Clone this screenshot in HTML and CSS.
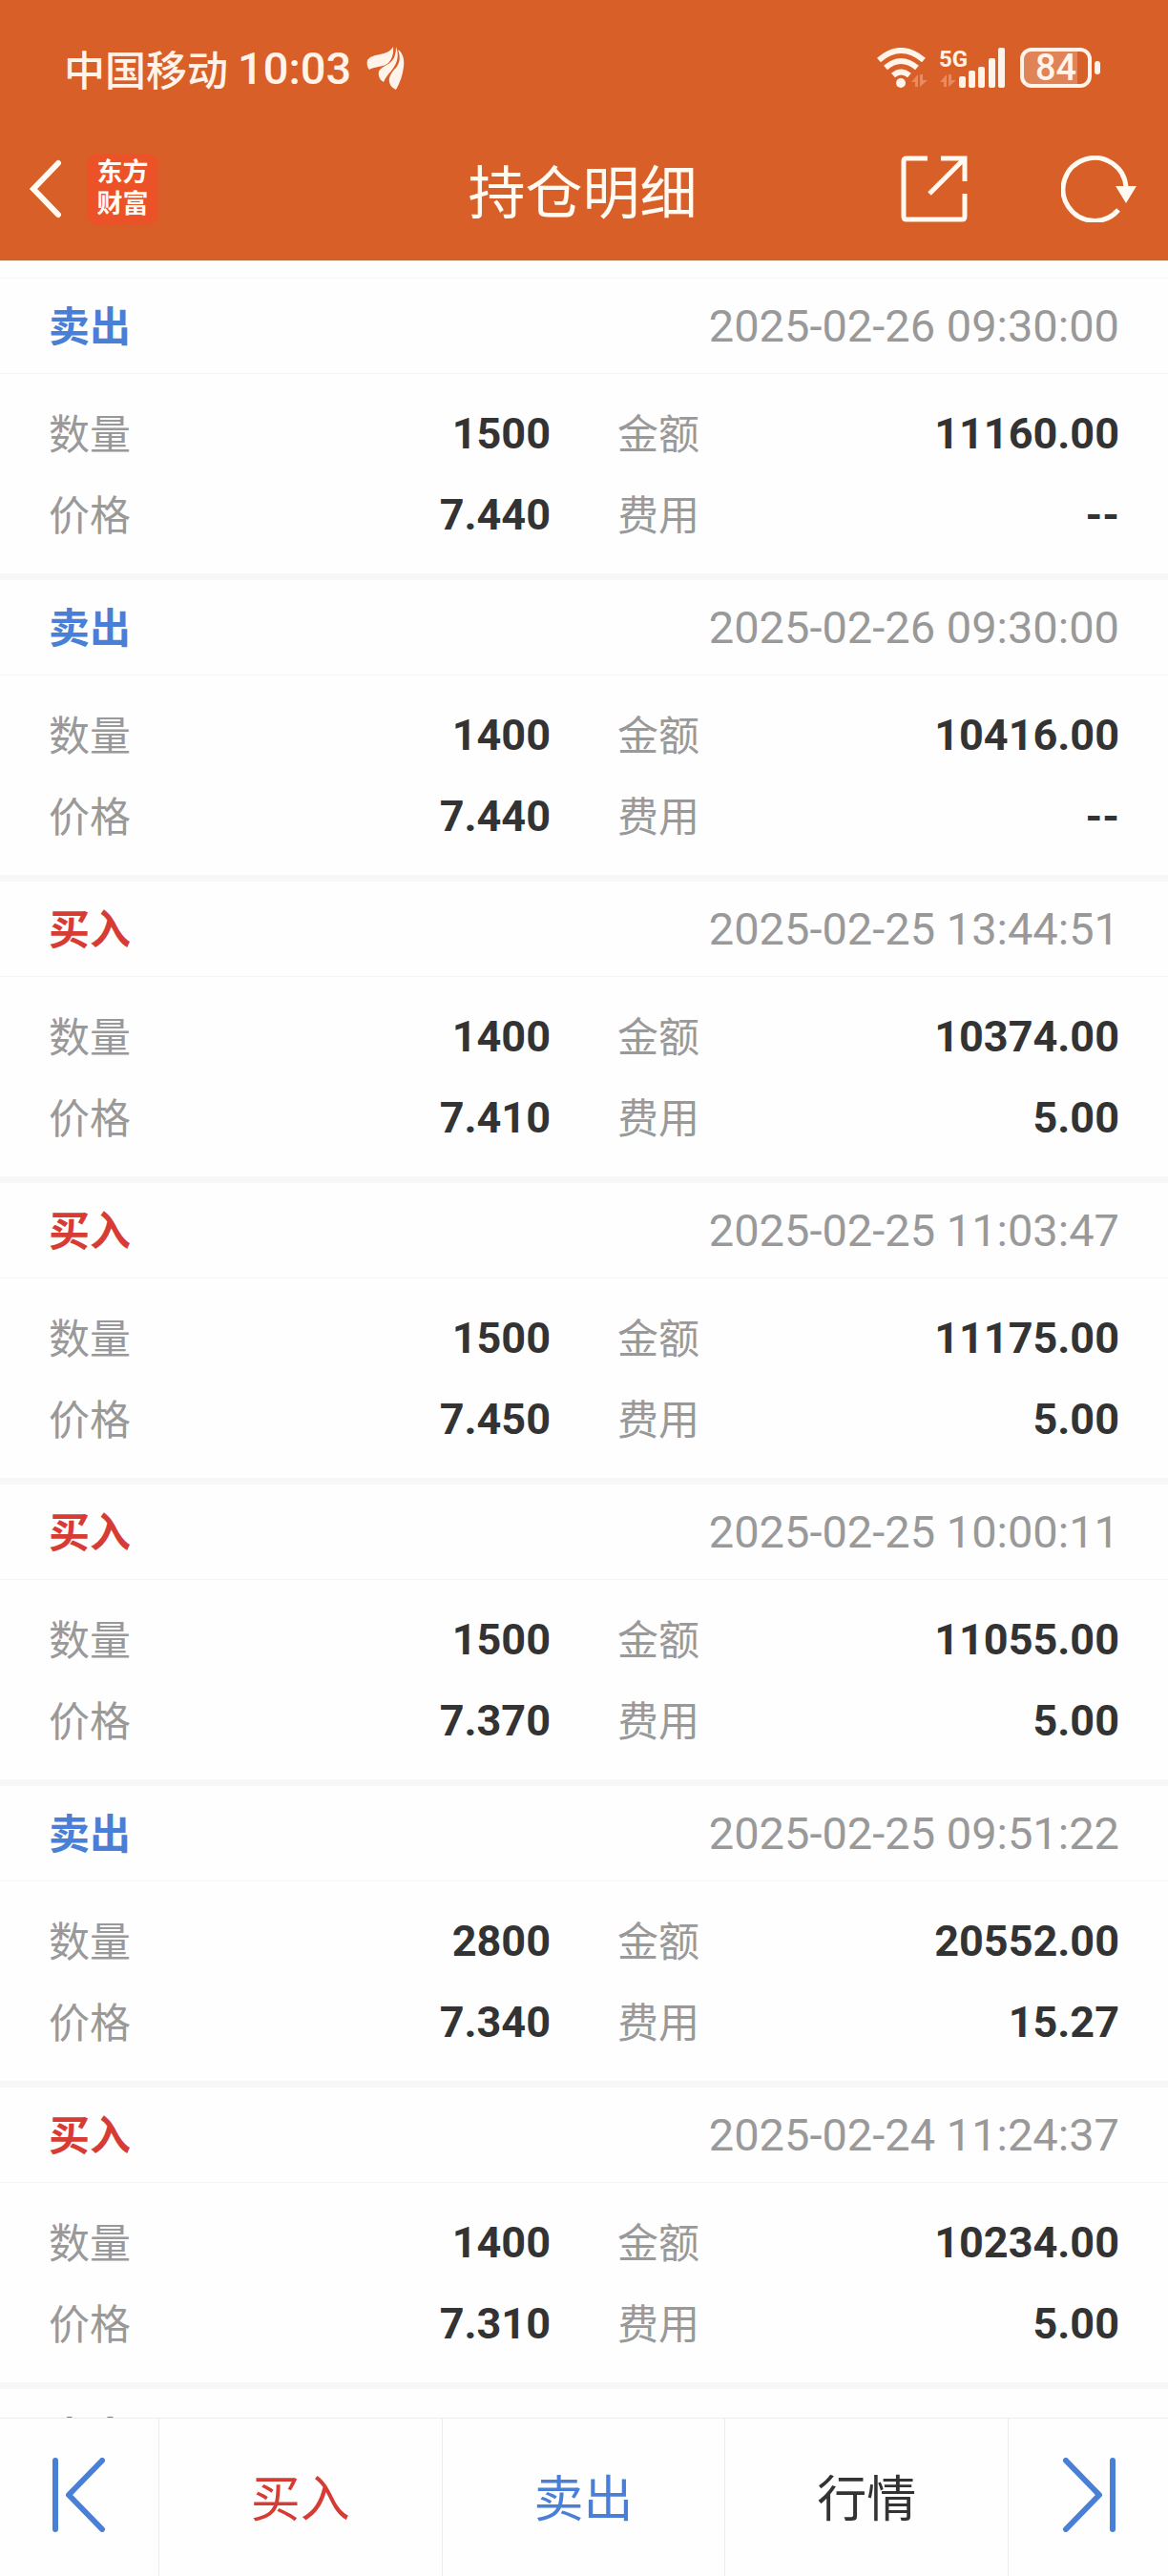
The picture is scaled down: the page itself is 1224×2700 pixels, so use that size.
FILE: index.html
```html
<!DOCTYPE html>
<html lang="zh-CN">
<head>
    <meta charset="UTF-8">
    <meta name="viewport" content="width=device-width, initial-scale=1.0">
    <title>持仓明细</title>
    <link rel="stylesheet" href="styles.css">
</head>
<body>
    <div class="app">
        <header class="header">
            <div class="status">
                <span class="carrier">中国移动</span>
                <span class="clock">10:03</span>
                <svg class="bird" width="40" height="46" viewBox="0 0 40 46" fill="currentColor">
                    <path d="M28 1C25 6 20 8 14 9C9 10 4 11 1 15C0 19 1 23 3 25C8 22 15 22 20 20C26 17 29 9 28 1Z"/>
                    <path d="M31 1C31 11 28 16 23 19C18 22 14 24 13 27C12 31 14 36 18 38C21 31 26 27 29 22C33 16 34 8 31 1Z"/>
                    <path d="M33 4C36 12 35 18 31 23C27 27 25 30 24 34C23 39 26 44 31 46C35 39 38 31 39 22C40 14 38 7 33 4Z"/>
                </svg>
                <div class="signals">
                    <svg class="wifi" width="54" height="42" viewBox="0 0 54 42" fill="none" stroke="currentColor" stroke-width="6">
                        <path d="M2 13Q25 -7 49 13"/>
                        <path d="M9 21Q25 7 42 21"/>
                        <path d="M17 29Q25 22 34 29"/>
                        <circle cx="25" cy="37" r="5" fill="currentColor" stroke="none"/>
                        <path class="faint" d="M36 36L43 28V41H40V36ZM45 28H48V34H53L45 41Z"/>
                    </svg>
                    <svg class="cell" width="69" height="42" viewBox="0 0 69 42" fill="currentColor">
                        <text class="net" x="0" y="20">5G</text>
                        <path class="faint" d="M1 36L8 28V41H5V36ZM10 28H13V34H18L10 41Z"/>
                        <rect x="21" y="30" width="7" height="12" rx="2"/>
                        <rect x="31" y="24" width="7" height="18" rx="2"/>
                        <rect x="41" y="20" width="7" height="22" rx="2"/>
                        <rect x="52" y="11" width="7" height="31" rx="2"/>
                        <rect x="62" y="0" width="7" height="42" rx="2"/>
                    </svg>
                    <div class="battery">84</div>
                </div>
            </div>
            <nav class="titlebar">
                <div class="side">
                    <button class="icon-btn" aria-label="返回">
                        <svg width="36" height="62" viewBox="0 0 36 62" fill="none" stroke="currentColor" stroke-width="6" stroke-linecap="round" stroke-linejoin="miter">
                            <path d="M32 4L6 31L32 58"/>
                        </svg>
                    </button>
                    <div class="logo">东方<br>财富</div>
                </div>
                <h1 class="title">持仓明细</h1>
                <div class="side side-right">
                    <button class="icon-btn" aria-label="分享">
                        <svg width="70" height="70" viewBox="0 0 70 70" fill="none" stroke="currentColor" stroke-width="5">
                            <path d="M28 3H6Q3 3 3 6V64Q3 67 6 67H64Q67 67 67 64V40M42 3H67V27M67 3L30 40"/>
                        </svg>
                    </button>
                    <button class="icon-btn" aria-label="刷新">
                        <svg width="80" height="70" viewBox="0 0 80 70" fill="none" stroke="currentColor" stroke-width="5">
                            <path d="M68 34A33 33 0 1 0 60 57"/>
                            <path d="M57 32H79L68 50Z" fill="currentColor" stroke="none"/>
                        </svg>
                    </button>
                </div>
            </nav>
        </header>

        <main class="list">
            <section class="card">
                <div class="card-head">
                    <h2 class="sell">卖出</h2>
                    <time>2025-02-26 09:30:00</time>
                </div>
                <dl>
                    <div><dt>数量</dt><dd>1500</dd></div>
                    <div><dt>金额</dt><dd>11160.00</dd></div>
                    <div><dt>价格</dt><dd>7.440</dd></div>
                    <div><dt>费用</dt><dd>--</dd></div>
                </dl>
            </section>
            <section class="card">
                <div class="card-head">
                    <h2 class="sell">卖出</h2>
                    <time>2025-02-26 09:30:00</time>
                </div>
                <dl>
                    <div><dt>数量</dt><dd>1400</dd></div>
                    <div><dt>金额</dt><dd>10416.00</dd></div>
                    <div><dt>价格</dt><dd>7.440</dd></div>
                    <div><dt>费用</dt><dd>--</dd></div>
                </dl>
            </section>
            <section class="card">
                <div class="card-head">
                    <h2 class="buy">买入</h2>
                    <time>2025-02-25 13:44:51</time>
                </div>
                <dl>
                    <div><dt>数量</dt><dd>1400</dd></div>
                    <div><dt>金额</dt><dd>10374.00</dd></div>
                    <div><dt>价格</dt><dd>7.410</dd></div>
                    <div><dt>费用</dt><dd>5.00</dd></div>
                </dl>
            </section>
            <section class="card">
                <div class="card-head">
                    <h2 class="buy">买入</h2>
                    <time>2025-02-25 11:03:47</time>
                </div>
                <dl>
                    <div><dt>数量</dt><dd>1500</dd></div>
                    <div><dt>金额</dt><dd>11175.00</dd></div>
                    <div><dt>价格</dt><dd>7.450</dd></div>
                    <div><dt>费用</dt><dd>5.00</dd></div>
                </dl>
            </section>
            <section class="card">
                <div class="card-head">
                    <h2 class="buy">买入</h2>
                    <time>2025-02-25 10:00:11</time>
                </div>
                <dl>
                    <div><dt>数量</dt><dd>1500</dd></div>
                    <div><dt>金额</dt><dd>11055.00</dd></div>
                    <div><dt>价格</dt><dd>7.370</dd></div>
                    <div><dt>费用</dt><dd>5.00</dd></div>
                </dl>
            </section>
            <section class="card">
                <div class="card-head">
                    <h2 class="sell">卖出</h2>
                    <time>2025-02-25 09:51:22</time>
                </div>
                <dl>
                    <div><dt>数量</dt><dd>2800</dd></div>
                    <div><dt>金额</dt><dd>20552.00</dd></div>
                    <div><dt>价格</dt><dd>7.340</dd></div>
                    <div><dt>费用</dt><dd>15.27</dd></div>
                </dl>
            </section>
            <section class="card">
                <div class="card-head">
                    <h2 class="buy">买入</h2>
                    <time>2025-02-24 11:24:37</time>
                </div>
                <dl>
                    <div><dt>数量</dt><dd>1400</dd></div>
                    <div><dt>金额</dt><dd>10234.00</dd></div>
                    <div><dt>价格</dt><dd>7.310</dd></div>
                    <div><dt>费用</dt><dd>5.00</dd></div>
                </dl>
            </section>
            <section class="card">
                <div class="card-head">
                    <h2 class="sell">卖出</h2>
                </div>
            </section>
        </main>

        <nav class="tabs">
            <button class="tab tab-end sell" aria-label="上一个">
                <svg width="56" height="78" viewBox="0 0 56 78" fill="none" stroke="currentColor" stroke-width="6" stroke-linecap="round" stroke-linejoin="round">
                    <path d="M3 3V75M52 3L17 39L52 75"/>
                </svg>
            </button>
            <button class="tab buy">买入</button>
            <button class="tab sell">卖出</button>
            <button class="tab">行情</button>
            <button class="tab tab-end sell" aria-label="下一个">
                <svg width="56" height="78" viewBox="0 0 56 78" fill="none" stroke="currentColor" stroke-width="6" stroke-linecap="round" stroke-linejoin="round">
                    <path d="M53 3V75M4 3L39 39L4 75"/>
                </svg>
            </button>
        </nav>
    </div>
</body>
</html>
```
FILE: styles.css
```css
* {
    box-sizing: border-box;
    margin: 0;
    padding: 0;
}
body {
    font-family: Roboto, "Noto Sans CJK SC", sans-serif;
    font-size: 43px;
    color: #333;
    background: #fefefe;
}
button {
    border: 0;
    background: none;
    color: inherit;
    font: inherit;
    cursor: pointer;
}
svg {
    display: block;
}
.app {
    display: flex;
    flex-direction: column;
    height: 100vh;
}

/* header */
.header {
    background: #d85f27;
    color: #fffaf2;
    border-bottom: 1px solid #b9683f;
    padding-bottom: 18px;
}
.status {
    display: flex;
    align-items: center;
    height: 142px;
    padding: 0 71px 0 67px;
    color: #fff3ea;
}
.carrier {
    font-family: "Noto Sans CJK SC", sans-serif;
    font-weight: 500;
    line-height: 48px;
}
.clock {
    font-size: 47px;
    font-weight: 500;
    line-height: 48px;
    margin-left: 10px;
    padding-top: 2px;
}
.bird {
    margin-left: 16px;
}
.signals {
    display: flex;
    align-items: center;
    margin-left: auto;
}
.cell {
    margin: 0 16px 0 11px;
    overflow: visible;
}
.net {
    font-size: 24px;
    font-weight: 700;
}
.faint {
    fill: #e98a5f;
    stroke: none;
}
.battery {
    position: relative;
    width: 75px;
    height: 42px;
    margin-right: 9px;
    border: 4px solid #fff3ea;
    border-radius: 12px;
    background: linear-gradient(90deg, #e08357 56px, transparent 56px);
    font-size: 38px;
    font-weight: 500;
    line-height: 34px;
    text-align: center;
}
.battery::after {
    content: "";
    position: absolute;
    right: -13px;
    top: 10px;
    width: 6px;
    height: 14px;
    border-radius: 3px;
    background: #fff3ea;
}
.titlebar {
    display: grid;
    grid-template-columns: 1fr auto 1fr;
    align-items: center;
    height: 112px;
    padding: 0 32px 0 29px;
}
.side {
    display: flex;
    align-items: center;
    gap: 26px;
}
.side-right {
    justify-content: flex-end;
    gap: 98px;
}
.logo {
    width: 75px;
    height: 75px;
    padding-top: 4px;
    border-radius: 12px;
    background: #eb5228;
    font-size: 27px;
    font-weight: 700;
    line-height: 33px;
    text-align: center;
}
.title {
    font-family: "Noto Sans CJK SC", sans-serif;
    font-size: 60px;
    font-weight: 400;
    line-height: 80px;
}

/* records */
.list {
    flex: 1;
    min-height: 0;
    padding-top: 18px;
    overflow-y: auto;
    scrollbar-width: none;
}
.card {
    border-bottom: 7px solid #f6f7f9;
}
.card:first-child {
    border-top: 1px solid #f5f5f6;
}
.card-head {
    display: flex;
    align-items: center;
    justify-content: space-between;
    height: 100px;
    padding: 0 51px;
    border-bottom: 1px solid #f5f5f6;
}
.card-head h2 {
    font-size: 43px;
    font-weight: 700;
    padding-bottom: 5px;
}
.card-head time {
    font-size: 47px;
    color: #999;
}
.card dl {
    display: grid;
    grid-template-columns: 1fr 1fr;
    column-gap: 70px;
    padding: 20px 51px 19px;
}
.card dl div {
    display: flex;
    align-items: center;
    justify-content: space-between;
    height: 85px;
}
.card dt {
    color: #999;
    padding-bottom: 5px;
}
.card dd {
    font-size: 45px;
    font-weight: 700;
}
.buy {
    color: #d73c34;
}
.sell {
    color: #4a7fd6;
}

/* bottom bar */
.tabs {
    display: flex;
    height: 166px;
    border-top: 1px solid #ebebec;
    background: #fefefe;
}
.tab {
    display: flex;
    flex: 1;
    align-items: center;
    justify-content: center;
    padding-bottom: 5px;
    border-right: 1px solid #ebebec;
    font-size: 52px;
}
.tab-end {
    flex: 0 0 167px;
}
.tab:last-child {
    border-right: 0;
}
```
